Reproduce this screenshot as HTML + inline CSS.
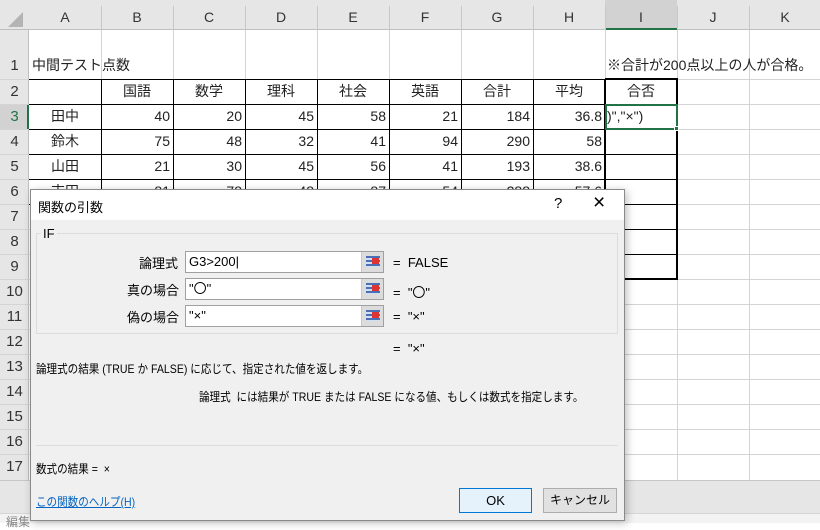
<!DOCTYPE html>
<html><head><meta charset="utf-8"><style>
*{margin:0;padding:0;box-sizing:border-box}
body{width:820px;height:523px;overflow:hidden;position:relative;background:#fff;font-family:"Liberation Sans","Noto Sans CJK JP",sans-serif;font-size:14px;color:#222}
.a{position:absolute;white-space:nowrap}
.hl{position:absolute;height:1px;background:#d4d4d4}
.vl{position:absolute;width:1px;background:#d4d4d4}
.bk{background:#000}
.ch{position:absolute;top:0;height:30px;line-height:34px;text-align:center;font-size:14px;color:#333}
.rh{position:absolute;left:0;width:29px;text-align:center;font-size:15px;color:#333;height:25px;line-height:25px}
.c{position:absolute;height:25px;line-height:25px;font-size:14px;color:#222}
.r{text-align:right;padding-right:3px}
.m{text-align:center}
.d{font-size:12px;color:#000}
.sx{transform:scaleX(0.88);transform-origin:0 0}
.inp{position:absolute;left:185px;width:199px;height:22px;background:#fff;border:1px solid #a0a0a0;font-size:13px;line-height:20px;padding-left:3px;color:#000}
.ic{position:absolute;right:0;top:0;width:22px;height:20px;background:#dcdcdc;border-left:1px solid #c8c8c8}
.ic:before{content:"";position:absolute;left:4px;top:4px;width:14px;height:11px;background:repeating-linear-gradient(#4a6fb5 0 2px,#cfe0f5 2px 4px)}
.ic:after{content:"";position:absolute;left:10px;top:6px;width:7px;height:6px;background:#d33}
</style></head><body>
<div class="a" style="left:0;top:0;width:820px;height:30px;background:#e6e6e6;border-bottom:1px solid #bfbfbf"></div>
<div class="a" style="left:0;top:30px;width:29px;height:450px;background:#e6e6e6;border-right:1px solid #bfbfbf"></div>
<div class="a" style="left:605px;top:0;width:72px;height:30px;background:#d2d2d2;border-bottom:2px solid #217346"></div>
<div class="a" style="left:0;top:104px;width:29px;height:25px;background:#d2d2d2;border-right:2px solid #217346"></div>
<div class="a" style="left:8px;top:12px;width:0;height:0;border-left:15px solid transparent;border-bottom:15px solid #b4b4b4"></div>
<div class="ch" style="left:29px;width:72px">A</div>
<div class="ch" style="left:101px;width:72px">B</div>
<div class="ch" style="left:173px;width:72px">C</div>
<div class="ch" style="left:245px;width:72px">D</div>
<div class="ch" style="left:317px;width:72px">E</div>
<div class="ch" style="left:389px;width:72px">F</div>
<div class="ch" style="left:461px;width:72px">G</div>
<div class="ch" style="left:533px;width:72px">H</div>
<div class="ch" style="left:605px;width:72px">I</div>
<div class="ch" style="left:677px;width:72px">J</div>
<div class="ch" style="left:749px;width:72px">K</div>
<div class="vl" style="left:101px;top:6px;height:24px;background:#c8c8c8"></div>
<div class="vl" style="left:173px;top:6px;height:24px;background:#c8c8c8"></div>
<div class="vl" style="left:245px;top:6px;height:24px;background:#c8c8c8"></div>
<div class="vl" style="left:317px;top:6px;height:24px;background:#c8c8c8"></div>
<div class="vl" style="left:389px;top:6px;height:24px;background:#c8c8c8"></div>
<div class="vl" style="left:461px;top:6px;height:24px;background:#c8c8c8"></div>
<div class="vl" style="left:533px;top:6px;height:24px;background:#c8c8c8"></div>
<div class="vl" style="left:605px;top:6px;height:24px;background:#c8c8c8"></div>
<div class="vl" style="left:677px;top:6px;height:24px;background:#c8c8c8"></div>
<div class="vl" style="left:749px;top:6px;height:24px;background:#c8c8c8"></div>
<div class="vl" style="left:101px;top:30px;height:450px"></div>
<div class="vl" style="left:173px;top:30px;height:450px"></div>
<div class="vl" style="left:245px;top:30px;height:450px"></div>
<div class="vl" style="left:317px;top:30px;height:450px"></div>
<div class="vl" style="left:389px;top:30px;height:450px"></div>
<div class="vl" style="left:461px;top:30px;height:450px"></div>
<div class="vl" style="left:533px;top:30px;height:450px"></div>
<div class="vl" style="left:605px;top:30px;height:450px"></div>
<div class="vl" style="left:677px;top:30px;height:450px"></div>
<div class="vl" style="left:749px;top:30px;height:450px"></div>
<div class="hl" style="left:0;width:820px;top:79px"></div>
<div class="hl" style="left:0;width:820px;top:104px"></div>
<div class="hl" style="left:0;width:820px;top:129px"></div>
<div class="hl" style="left:0;width:820px;top:154px"></div>
<div class="hl" style="left:0;width:820px;top:179px"></div>
<div class="hl" style="left:0;width:820px;top:204px"></div>
<div class="hl" style="left:0;width:820px;top:229px"></div>
<div class="hl" style="left:0;width:820px;top:254px"></div>
<div class="hl" style="left:0;width:820px;top:279px"></div>
<div class="hl" style="left:0;width:820px;top:304px"></div>
<div class="hl" style="left:0;width:820px;top:329px"></div>
<div class="hl" style="left:0;width:820px;top:354px"></div>
<div class="hl" style="left:0;width:820px;top:379px"></div>
<div class="hl" style="left:0;width:820px;top:404px"></div>
<div class="hl" style="left:0;width:820px;top:429px"></div>
<div class="hl" style="left:0;width:820px;top:454px"></div>
<div class="hl bk" style="left:29px;width:649px;top:79px"></div>
<div class="hl bk" style="left:29px;width:649px;top:104px"></div>
<div class="hl bk" style="left:29px;width:649px;top:129px"></div>
<div class="hl bk" style="left:29px;width:649px;top:154px"></div>
<div class="hl bk" style="left:29px;width:649px;top:179px"></div>
<div class="hl bk" style="left:29px;width:649px;top:204px"></div>
<div class="hl bk" style="left:605px;width:73px;top:229px"></div>
<div class="hl bk" style="left:605px;width:73px;top:254px"></div>
<div class="hl bk" style="left:605px;width:73px;top:278px;height:2px"></div>
<div class="vl bk" style="left:101px;top:79px;height:126px"></div>
<div class="vl bk" style="left:173px;top:79px;height:126px"></div>
<div class="vl bk" style="left:245px;top:79px;height:126px"></div>
<div class="vl bk" style="left:317px;top:79px;height:126px"></div>
<div class="vl bk" style="left:389px;top:79px;height:126px"></div>
<div class="vl bk" style="left:461px;top:79px;height:126px"></div>
<div class="vl bk" style="left:533px;top:79px;height:126px"></div>
<div class="vl bk" style="left:604px;top:79px;height:201px;width:2px"></div>
<div class="vl bk" style="left:676px;top:79px;height:201px;width:2px"></div>
<div class="a" style="left:605px;top:78px;width:73px;height:2px;background:#000"></div>
<div class="a" style="left:605px;top:104px;width:73px;height:26px;border:2px solid #217346;background:#fff"></div>
<div class="a" style="left:674px;top:126px;width:5px;height:5px;background:#217346;border:1px solid #fff"></div>
<div class="rh" style="top:53px">1</div>
<div class="rh" style="top:79px">2</div>
<div class="rh" style="top:104px;color:#217346">3</div>
<div class="rh" style="top:129px">4</div>
<div class="rh" style="top:154px">5</div>
<div class="rh" style="top:179px">6</div>
<div class="rh" style="top:204px">7</div>
<div class="rh" style="top:229px">8</div>
<div class="rh" style="top:254px">9</div>
<div class="rh" style="top:279px">10</div>
<div class="rh" style="top:304px">11</div>
<div class="rh" style="top:329px">12</div>
<div class="rh" style="top:354px">13</div>
<div class="rh" style="top:379px">14</div>
<div class="rh" style="top:404px">15</div>
<div class="rh" style="top:429px">16</div>
<div class="rh" style="top:454px">17</div>
<div class="c" style="left:32px;top:53px">中間テスト点数</div>
<div class="c" style="left:607px;top:53px">※合計が200点以上の人が合格。</div>
<div class="c m" style="left:101px;width:72px;top:79px">国語</div>
<div class="c m" style="left:173px;width:72px;top:79px">数学</div>
<div class="c m" style="left:245px;width:72px;top:79px">理科</div>
<div class="c m" style="left:317px;width:72px;top:79px">社会</div>
<div class="c m" style="left:389px;width:72px;top:79px">英語</div>
<div class="c m" style="left:461px;width:72px;top:79px">合計</div>
<div class="c m" style="left:533px;width:72px;top:79px">平均</div>
<div class="c m" style="left:605px;width:72px;top:79px">合否</div>
<div class="c m" style="left:29px;width:72px;top:104px">田中</div>
<div class="c m" style="left:29px;width:72px;top:129px">鈴木</div>
<div class="c m" style="left:29px;width:72px;top:154px">山田</div>
<div class="c r" style="left:101px;width:72px;top:104px">40</div><div class="c r" style="left:173px;width:72px;top:104px">20</div><div class="c r" style="left:245px;width:72px;top:104px">45</div><div class="c r" style="left:317px;width:72px;top:104px">58</div><div class="c r" style="left:389px;width:72px;top:104px">21</div><div class="c r" style="left:461px;width:72px;top:104px">184</div><div class="c r" style="left:533px;width:72px;top:104px">36.8</div>
<div class="c r" style="left:101px;width:72px;top:129px">75</div><div class="c r" style="left:173px;width:72px;top:129px">48</div><div class="c r" style="left:245px;width:72px;top:129px">32</div><div class="c r" style="left:317px;width:72px;top:129px">41</div><div class="c r" style="left:389px;width:72px;top:129px">94</div><div class="c r" style="left:461px;width:72px;top:129px">290</div><div class="c r" style="left:533px;width:72px;top:129px">58</div>
<div class="c r" style="left:101px;width:72px;top:154px">21</div><div class="c r" style="left:173px;width:72px;top:154px">30</div><div class="c r" style="left:245px;width:72px;top:154px">45</div><div class="c r" style="left:317px;width:72px;top:154px">56</div><div class="c r" style="left:389px;width:72px;top:154px">41</div><div class="c r" style="left:461px;width:72px;top:154px">193</div><div class="c r" style="left:533px;width:72px;top:154px">38.6</div>
<div class="c r" style="left:101px;width:72px;top:179px">81</div><div class="c r" style="left:173px;width:72px;top:179px">78</div><div class="c r" style="left:245px;width:72px;top:179px">48</div><div class="c r" style="left:317px;width:72px;top:179px">87</div><div class="c r" style="left:389px;width:72px;top:179px">54</div><div class="c r" style="left:461px;width:72px;top:179px">288</div><div class="c r" style="left:533px;width:72px;top:179px">57.6</div>
<div class="c m" style="left:29px;width:72px;top:179px">吉田</div>
<div class="c" style="left:607px;top:104px">)","×")</div>
<div class="a" style="left:0;top:480px;width:820px;height:33px;background:#e6e6e6;border-top:1px solid #c6c6c6"></div>
<div class="a" style="left:0;top:513px;width:820px;height:10px;background:#f3f3f3;border-top:1px solid #d6d6d6;font-size:12px;line-height:16px;padding-left:6px;color:#888">編集</div>
<div class="a" style="left:30px;top:189px;width:595px;height:332px;background:#f0f0f0;border:1px solid #8a8a8a;box-shadow:2px 2px 8px rgba(0,0,0,.25)">
<div class="a" style="left:0;top:0;width:593px;height:30px;background:#fff"></div>
<div class="a d" style="left:7px;top:7px;font-size:13px">関数の引数</div>
<div class="a" style="left:523px;top:5px;font-size:15px;color:#000">?</div>
<div class="a" style="left:562px;top:1px;font-size:21px;color:#000">×</div>
<div class="a" style="left:5px;top:43px;width:582px;height:101px;border:1px solid #dcdcdc"></div>
<div class="a d" style="left:10px;top:36px;background:#f0f0f0;padding:0 2px;font-size:13px">IF</div>
<div class="a d" style="left:108px;top:63px;width:38px;text-align:right;font-size:13px">論理式</div>
<div class="a d" style="left:96px;top:90px;width:50px;text-align:right;font-size:13px">真の場合</div>
<div class="a d" style="left:96px;top:117px;width:50px;text-align:right;font-size:13px">偽の場合</div>
<div class="inp" style="left:154px;top:61px">G3&gt;200|<div class="ic"></div></div>
<div class="inp" style="left:154px;top:88px">"〇"<div class="ic"></div></div>
<div class="inp" style="left:154px;top:115px">"×"<div class="ic"></div></div>
<div class="a d" style="left:362px;top:65px;font-size:13px">=&nbsp;&nbsp;FALSE</div>
<div class="a d" style="left:362px;top:92px;font-size:13px">=&nbsp;&nbsp;"〇"</div>
<div class="a d" style="left:362px;top:119px;font-size:13px">=&nbsp;&nbsp;"×"</div>
<div class="a d" style="left:362px;top:151px;font-size:13px">=&nbsp;&nbsp;"×"</div>
<div class="a d sx" style="left:5px;top:170px">論理式の結果 (TRUE か FALSE) に応じて、指定された値を返します。</div>
<div class="a d sx" style="left:168px;top:198px">論理式&nbsp;&nbsp;には結果が TRUE または FALSE になる値、もしくは数式を指定します。</div>
<div class="a" style="left:5px;top:255px;width:582px;height:1px;background:#dcdcdc"></div>
<div class="a d sx" style="left:5px;top:270px">数式の結果 =&nbsp;&nbsp;×</div>
<div class="a sx" style="left:5px;top:303px;font-size:12px;color:#0563c1;text-decoration:underline">この関数のヘルプ(H)</div>
<div class="a" style="left:428px;top:298px;width:73px;height:25px;background:#e5f1fb;border:1px solid #0078d7;text-align:center;line-height:23px;font-size:13px;color:#000">OK</div>
<div class="a" style="left:512px;top:298px;width:74px;height:25px;background:#e1e1e1;border:1px solid #adadad;text-align:center;line-height:23px;font-size:12px;color:#000">キャンセル</div>
</div>
</body></html>
